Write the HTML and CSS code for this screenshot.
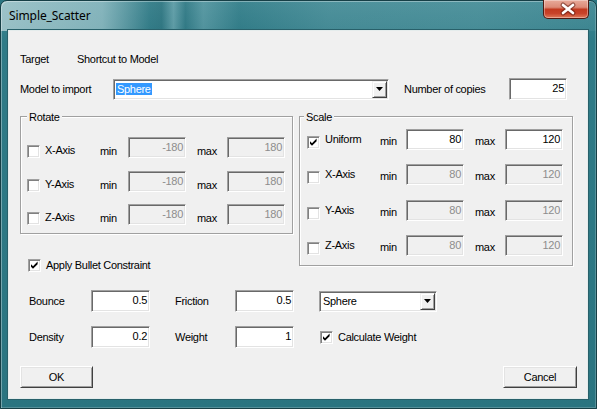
FILE: index.html
```html
<!DOCTYPE html>
<html>
<head>
<meta charset="utf-8">
<link rel="stylesheet" href="styles.css">
</head>
<body>
<div class="window">
  <div class="titlebar">
    <span class="title">Simple_Scatter</span>
    <div class="close">
      <svg width="46" height="18" viewBox="0 0 46 18">
        <path d="M19 5 L29 13 M29 5 L19 13" stroke="#5a1a10" stroke-opacity="0.55" stroke-width="5" stroke-linecap="round"/>
        <path d="M19 5 L29 13 M29 5 L19 13" stroke="#ffffff" stroke-width="2.6" stroke-linecap="round"/>
      </svg>
    </div>
  </div>
  <div class="client">
    <div class="row-target">
      <span class="target-lbl">Target</span>
      <span>Shortcut to Model</span>
    </div>
    <div class="row-model">
      <span class="model-lbl">Model to import</span>
      <div class="combo combo-model">
        <span class="sel">Sphere</span>
        <span class="drop"><svg width="7" height="4" viewBox="0 0 7 4"><polygon points="0,0 7,0 3.5,4" fill="#000"/></svg></span>
      </div>
      <span class="copies-lbl">Number of copies</span>
      <div class="field">25</div>
    </div>

    <div class="groups">
      <div class="left-col">
        <div class="group rotate">
          <span class="legend">Rotate</span>
          <div class="rows">
            <div class="grow">
              <div class="cbl"><span class="cb"></span><span class="cbt">X-Axis</span></div>
              <span class="mn">min</span><div class="field dis">-180</div>
              <span class="mx">max</span><div class="field dis">180</div>
            </div>
            <div class="grow">
              <div class="cbl"><span class="cb"></span><span class="cbt">Y-Axis</span></div>
              <span class="mn">min</span><div class="field dis">-180</div>
              <span class="mx">max</span><div class="field dis">180</div>
            </div>
            <div class="grow">
              <div class="cbl"><span class="cb"></span><span class="cbt">Z-Axis</span></div>
              <span class="mn">min</span><div class="field dis">-180</div>
              <span class="mx">max</span><div class="field dis">180</div>
            </div>
          </div>
        </div>
        <div class="check bullet">
          <span class="cb"><svg width="11" height="11" viewBox="0 0 11 11"><path d="M2 4.2 L4 6.2 L8.6 1.6 L8.6 4.2 L4 8.8 L2 6.8 Z" fill="#000"/></svg></span>
          <span>Apply Bullet Constraint</span>
        </div>
      </div>

      <div class="group scale">
        <span class="legend">Scale</span>
        <div class="rows">
          <div class="grow">
            <div class="cbl"><span class="cb"><svg width="11" height="11" viewBox="0 0 11 11"><path d="M2 4.2 L4 6.2 L8.6 1.6 L8.6 4.2 L4 8.8 L2 6.8 Z" fill="#000"/></svg></span><span class="cbt">Uniform</span></div>
            <span class="mn">min</span><div class="field">80</div>
            <span class="mx">max</span><div class="field">120</div>
          </div>
          <div class="grow">
            <div class="cbl"><span class="cb"></span><span class="cbt">X-Axis</span></div>
            <span class="mn">min</span><div class="field dis">80</div>
            <span class="mx">max</span><div class="field dis">120</div>
          </div>
          <div class="grow">
            <div class="cbl"><span class="cb"></span><span class="cbt">Y-Axis</span></div>
            <span class="mn">min</span><div class="field dis">80</div>
            <span class="mx">max</span><div class="field dis">120</div>
          </div>
          <div class="grow">
            <div class="cbl"><span class="cb"></span><span class="cbt">Z-Axis</span></div>
            <span class="mn">min</span><div class="field dis">80</div>
            <span class="mx">max</span><div class="field dis">120</div>
          </div>
        </div>
      </div>
    </div>

    <div class="phys">
      <div class="prow">
        <span class="plbl">Bounce</span><div class="field pf">0.5</div>
        <span class="plbl2">Friction</span><div class="field pf">0.5</div>
        <div class="combo combo-shape">
          <span class="plain">Sphere</span>
          <span class="drop"><svg width="7" height="4" viewBox="0 0 7 4"><polygon points="0,0 7,0 3.5,4" fill="#000"/></svg></span>
        </div>
      </div>
      <div class="prow">
        <span class="plbl">Density</span><div class="field pf">0.2</div>
        <span class="plbl2">Weight</span><div class="field pf">1</div>
        <div class="check calc">
          <span class="cb"><svg width="11" height="11" viewBox="0 0 11 11"><path d="M2 4.2 L4 6.2 L8.6 1.6 L8.6 4.2 L4 8.8 L2 6.8 Z" fill="#000"/></svg></span>
          <span>Calculate Weight</span>
        </div>
      </div>
    </div>

    <div class="buttons">
      <button class="btn">OK</button>
      <button class="btn">Cancel</button>
    </div>
  </div>
</div>
</body>
</html>
```

FILE: styles.css
```css
* { box-sizing: border-box; }
html, body { margin: 0; padding: 0; }
body {
  width: 597px;
  height: 409px;
  overflow: hidden;
  font-family: "Liberation Sans", Arial, sans-serif;
  font-size: 11px;
  letter-spacing: -0.3px;
  line-height: 13px;
  color: #000;
  background: #2b7581;
}

.window {
  width: 597px;
  height: 409px;
  display: flex;
  flex-direction: column;
  padding: 0 8px 9px 7px;
  border: 1px solid #163f46;
  border-radius: 7px 7px 0 0;
  background:
    linear-gradient(90deg,
      rgba(215,232,234,0.62) 0,
      rgba(200,224,228,0.52) 17%,
      rgba(40,90,100,0.10) 25%,
      rgba(30,80,90,0.18) 27%,
      rgba(190,220,225,0.30) 29%,
      rgba(30,80,90,0.12) 31%,
      rgba(190,220,225,0.22) 34%,
      rgba(30,80,90,0.05) 40%,
      rgba(170,205,210,0.15) 55%,
      rgba(150,195,200,0.20) 80%,
      rgba(150,195,200,0.10) 100%) 0 0 / 100% 30px no-repeat,
    linear-gradient(180deg, #3f8893 0, #2f7b87 40px, #2c7783 70%, #2a7480 100%);
  box-shadow: inset 1px 1px 0 rgba(255,255,255,0.35), inset -1px -1px 0 rgba(255,255,255,0.2);
}

.titlebar {
  height: 29px;
  display: flex;
  justify-content: space-between;
  align-items: flex-start;
}
.title {
  margin: 7px 0 0 1px;
  font-family: "Noto Sans", "Open Sans", sans-serif;
  font-size: 12px;
  letter-spacing: -0.1px;
  line-height: 16px;
  color: #000;
}
.close {
  width: 46px;
  height: 19px;
  margin: -1px -1px 0 0;
  border: 1px solid #4e1a12;
  border-top: none;
  border-radius: 0 0 5px 5px;
  background: linear-gradient(180deg, #e8aa9a 0, #dc8b78 40%, #c23a20 52%, #c8432a 75%, #df7a5a 100%);
  box-shadow: inset 0 0 0 1px rgba(255,255,255,0.35);
}
.close svg { display: block; }

.client {
  flex: 1;
  background: #f0f0f0;
  border: 1px solid #e4ecec;
  box-shadow: 0 0 0 1px #28606a;
  padding: 0 10px 0 11px;
  display: flex;
  flex-direction: column;
}

.row-target {
  margin-top: 22px;
  height: 13px;
  display: flex;
}
.target-lbl { width: 57px; }

.row-model {
  margin-top: 12px;
  height: 22px;
  display: flex;
  align-items: center;
}
.model-lbl { width: 93px; }
.copies-lbl { margin-left: 15px; width: 105px; }

/* sunken controls */
.field {
  width: 58px;
  height: 22px;
  flex: none;
  background: #fff;
  border: 1px solid;
  border-color: #a0a0a0 #ffffff #ffffff #a0a0a0;
  box-shadow: inset 1px 1px 0 #696969, inset -1px -1px 0 #e3e3e3;
  text-align: right;
  padding: 2px 2px 0 0;
  line-height: 15px;
}
.field.dis {
  background: #f0f0f0;
  color: #8d8d8d;
}

.combo {
  height: 21px;
  flex: none;
  background: #fff;
  border: 1px solid;
  border-color: #a0a0a0 #ffffff #ffffff #a0a0a0;
  box-shadow: inset 1px 1px 0 #696969, inset -1px -1px 0 #e3e3e3;
  display: flex;
  align-items: center;
  padding: 1px 1px 1px 2px;
}
.combo-model { width: 276px; }
.sel {
  background: #3399ff;
  color: #fff;
  padding: 0 1px;
  line-height: 12px;
  height: 12px;
}
.plain { padding-left: 1px; }
.drop {
  margin-left: auto;
  width: 15px;
  height: 17px;
  background: #f0f0f0;
  border: 1px solid;
  border-color: #f0f0f0 #404040 #404040 #f0f0f0;
  box-shadow: inset 1px 1px 0 #ffffff, inset -1px -1px 0 #a0a0a0;
  display: flex;
  align-items: center;
  justify-content: center;
}
.drop svg { display: block; }

/* groups */
.groups {
  margin-top: 16px;
  display: flex;
  gap: 6px;
  align-items: flex-start;
}
.left-col { width: 273px; display: flex; flex-direction: column; }
.group {
  border: 1px solid #a0a0a0;
  box-shadow: inset 1px 1px 0 #ffffff, 1px 1px 0 #ffffff;
}
.rotate { width: 273px; height: 118px; padding: 0 0 0 6px; }
.scale { width: 274px; height: 150px; padding: 0 0 0 7px; }
.legend {
  display: block;
  width: fit-content;
  margin: -6px 0 0 0;
  padding: 0 2px;
  height: 13px;
  background: #f0f0f0;
}
.scale .legend { margin-left: -3px; }
.rotate .rows { margin-top: 13px; display: flex; flex-direction: column; gap: 12.5px; }
.scale .rows { margin-top: 5px; display: flex; flex-direction: column; gap: 14.3px; }
.grow {
  height: 21px;
  display: flex;
  align-items: flex-start;
}
.grow .field { height: 21px; }
.cbl { width: 73px; display: flex; align-items: flex-start; gap: 5px; }
.mn { width: 28px; }
.scale .mn { width: 26px; }
.mx { width: 30px; margin-left: 11px; }
.rotate .cb { margin-top: 8px; }
.rotate .cbt { margin-top: 7px; }
.rotate .mn, .rotate .mx { margin-top: 8px; }
.scale .cb { margin-top: 7px; }
.scale .cbt { margin-top: 4px; }
.scale .mn, .scale .mx { margin-top: 6px; }

.cb {
  width: 13px;
  height: 13px;
  flex: none;
  background: #fff;
  border: 1px solid;
  border-color: #a0a0a0 #ffffff #ffffff #a0a0a0;
  box-shadow: inset 1px 1px 0 #808080, inset -1px -1px 0 #e3e3e3;
  display: block;
}
.cb svg { display: block; }

.check { display: flex; align-items: center; gap: 5px; }
.bullet { margin-top: 25px; padding-left: 8px; height: 13px; }

/* physics */
.phys {
  margin-top: 18px;
  display: flex;
  flex-direction: column;
  gap: 14px;
}
.prow {
  height: 22px;
  display: flex;
  align-items: center;
  padding-left: 9px;
}
.plbl { width: 62px; }
.plbl2 { width: 60px; margin-left: 25px; }
.pf { width: 59px; }
.combo-shape { width: 118px; margin-left: 25px; }
.calc { margin-left: 26px; }

.buttons {
  margin-top: 18px;
  display: flex;
  justify-content: space-between;
}
.btn {
  width: 73px;
  height: 22px;
  padding: 0;
  margin: 0;
  font: inherit;
  letter-spacing: -0.3px;
  color: #000;
  background: #f0f0f0;
  border: 1px solid;
  border-color: #ffffff #404040 #404040 #ffffff;
  box-shadow: inset 1px 1px 0 #e3e3e3, inset -1px -1px 0 #a0a0a0;
}
.btn + .btn { width: 74px; }
```
